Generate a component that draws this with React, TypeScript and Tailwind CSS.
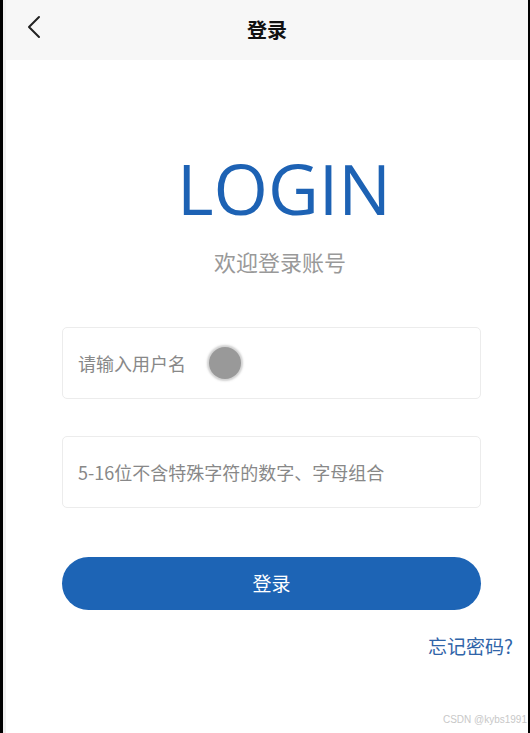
import React from "react";

export default function App() {
  const cjk = { fontFamily: '"Noto Sans CJK SC", "Noto Sans", sans-serif' };
  return (
    <div className="w-[530px] h-[733px] flex bg-white overflow-hidden" style={cjk}>
      <div className="w-[3px] bg-black shrink-0" />
      <div className="w-[3px] bg-[#f0f0f0] shrink-0" />
      <div className="flex-1 flex flex-col relative">
        <div className="h-[60px] bg-[#f7f7f7] flex items-center relative shrink-0">
          <svg className="absolute left-[20px] top-[15px]" width="16" height="24" viewBox="0 0 16 24" fill="none">
            <path d="M13 2 L3 12 L13 22" stroke="#222" strokeWidth="2" strokeLinecap="round" strokeLinejoin="round" />
          </svg>
          <div className="w-full text-center text-[20px] font-bold text-[#111]">登录</div>
        </div>
        <div className="flex flex-col items-center mt-[93px]">
          <div className="text-[70px] leading-none text-[#1d62b4] ml-[34px]" style={{ fontFamily: '"Open Sans", "Noto Sans", sans-serif' }}>LOGIN</div>
          <div className="text-[22px] text-[#999] mt-[27px] leading-none ml-[26px]">欢迎登录账号</div>
        </div>
        <div className="flex flex-col pl-[56px] pr-[47px] mt-[55px]">
          <div className="h-[72px] border border-[#ececec] rounded-[5px] flex items-center pl-[15px]">
            <span className="text-[18px] text-[#888]">请输入用户名</span>
            <span className="ml-[23px] w-[32px] h-[32px] rounded-full bg-[#999] shadow-[0_0_2px_2px_rgba(153,153,153,0.45)]" />
          </div>
          <div className="h-[72px] border border-[#ececec] rounded-[5px] flex items-center pl-[15px] mt-[37px]">
            <span className="text-[18px] text-[#888]">5-16位不含特殊字符的数字、字母组合</span>
          </div>
          <button className="h-[53px] rounded-full bg-[#1d64b5] text-white text-[19px] mt-[49px] flex items-center justify-center">登录</button>
          <div className="flex justify-end mt-[22px] mr-[-32px]">
            <span className="text-[19px] text-[#2f64a8]">忘记密码?</span>
          </div>
        </div>
        <div className="absolute right-[1px] bottom-[6px] text-[10px] text-[#c8c8c8]" style={{ fontFamily: '"Liberation Sans", sans-serif' }}>CSDN @kybs1991</div>
      </div>
      <div className="w-[2px] bg-black shrink-0" />
    </div>
  );
}
